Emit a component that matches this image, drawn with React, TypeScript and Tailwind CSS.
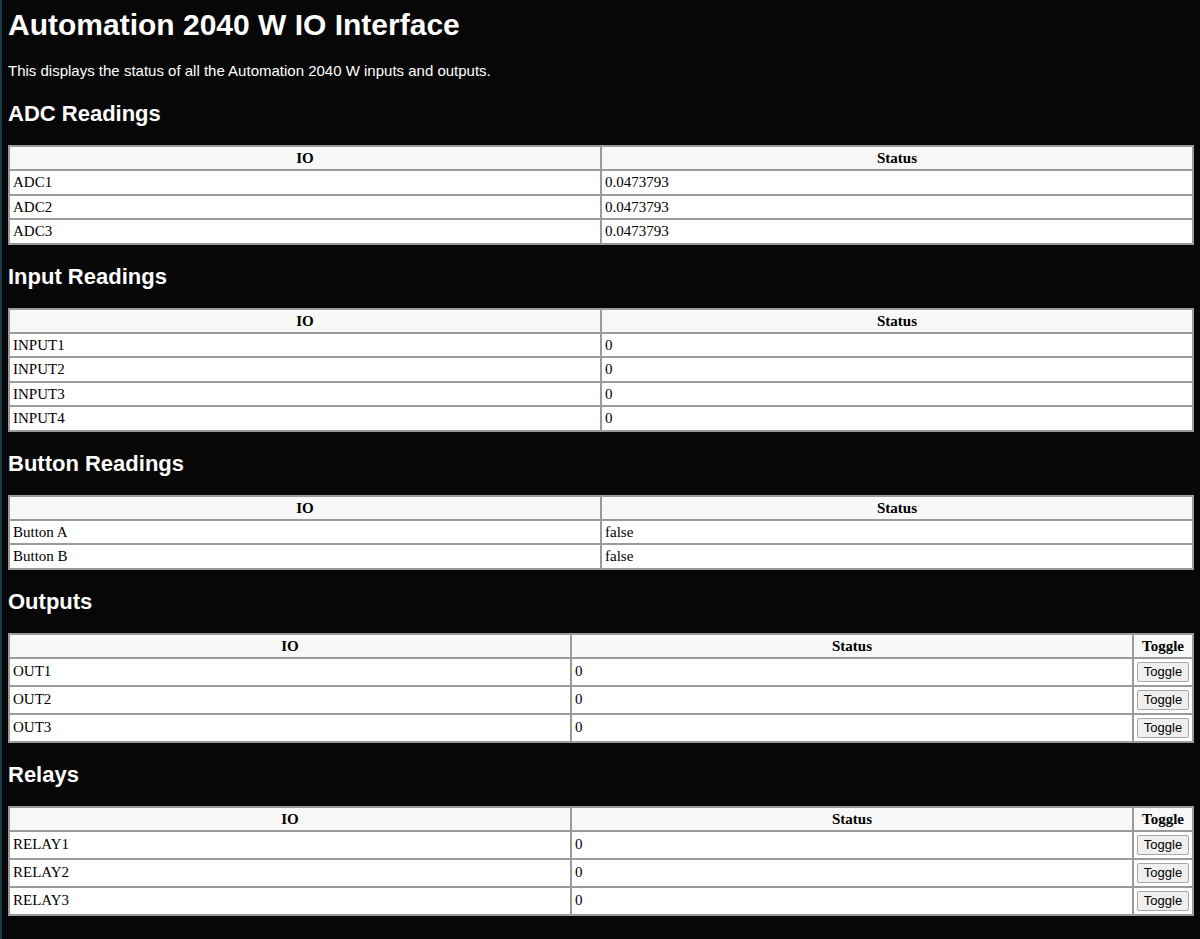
import type { ReactNode } from 'react';

type Row = { io: string; status: string };

const adc: Row[] = [
  { io: 'ADC1', status: '0.0473793' },
  { io: 'ADC2', status: '0.0473793' },
  { io: 'ADC3', status: '0.0473793' },
];

const inputs: Row[] = [
  { io: 'INPUT1', status: '0' },
  { io: 'INPUT2', status: '0' },
  { io: 'INPUT3', status: '0' },
  { io: 'INPUT4', status: '0' },
];

const buttons: Row[] = [
  { io: 'Button A', status: 'false' },
  { io: 'Button B', status: 'false' },
];

const outputs: Row[] = [
  { io: 'OUT1', status: '0' },
  { io: 'OUT2', status: '0' },
  { io: 'OUT3', status: '0' },
];

const relays: Row[] = [
  { io: 'RELAY1', status: '0' },
  { io: 'RELAY2', status: '0' },
  { io: 'RELAY3', status: '0' },
];

const th = 'border border-[#9a9a9a] bg-[#f8f8f8] px-[3px] py-[3px] text-center font-bold leading-[16px]';
const td = 'border border-[#9a9a9a] bg-white px-[3px] py-[3px] text-left leading-[16.5px]';

function Heading({ children }: { children: ReactNode }) {
  return <h2 className="mt-[19px] mb-[19px] text-[22px] font-bold leading-[25px]">{children}</h2>;
}

function ReadTable({ rows }: { rows: Row[] }) {
  return (
    <table className="w-full table-fixed border-separate border-spacing-0 border border-[#9a9a9a] text-[15px] text-black [font-family:'Liberation_Serif',serif]">
      <thead>
        <tr>
          <th className={th}>IO</th>
          <th className={th}>Status</th>
        </tr>
      </thead>
      <tbody>
        {rows.map(r => (
          <tr key={r.io}>
            <td className={td}>{r.io}</td>
            <td className={td}>{r.status}</td>
          </tr>
        ))}
      </tbody>
    </table>
  );
}

function ToggleTable({ rows }: { rows: Row[] }) {
  return (
    <table className="w-full table-fixed border-separate border-spacing-0 border border-[#9a9a9a] text-[15px] text-black [font-family:'Liberation_Serif',serif]">
      <colgroup>
        <col />
        <col />
        <col className="w-[60px]" />
      </colgroup>
      <thead>
        <tr>
          <th className={th + ' h-[23px]'}>IO</th>
          <th className={th + ' h-[23px]'}>Status</th>
          <th className={th + ' h-[23px]'}>Toggle</th>
        </tr>
      </thead>
      <tbody>
        {rows.map(r => (
          <tr key={r.io}>
            <td className={td + ' h-[25px]'}>{r.io}</td>
            <td className={td + ' h-[25px]'}>{r.status}</td>
            <td className={td + ' h-[25px] px-[2px] py-[2px] text-center'}>
              <button
                type="button"
                className="h-[20px] w-[52px] rounded-[2px] border border-[#a8a8a8] bg-[#efefef] text-[13px] leading-[14px] text-black [font-family:'Liberation_Sans',Arial,sans-serif]"
              >
                Toggle
              </button>
            </td>
          </tr>
        ))}
      </tbody>
    </table>
  );
}

export default function App() {
  return (
    <div className="min-h-screen border-l-2 border-[#1b3a47] bg-[#070707] pl-[6px] pr-[6px] pb-[24px] pt-[8px] text-white [font-family:'Liberation_Sans',Arial,sans-serif]">
      <h1 className="text-[30px] font-bold leading-[34px]">Automation 2040 W IO Interface</h1>
      <p className="mt-[20px] mb-[22px] text-[15px] leading-[17px]">This displays the status of all the Automation 2040 W inputs and outputs.</p>

      <Heading>ADC Readings</Heading>
      <ReadTable rows={adc} />

      <Heading>Input Readings</Heading>
      <ReadTable rows={inputs} />

      <Heading>Button Readings</Heading>
      <ReadTable rows={buttons} />

      <Heading>Outputs</Heading>
      <ToggleTable rows={outputs} />

      <Heading>Relays</Heading>
      <ToggleTable rows={relays} />
    </div>
  );
}
